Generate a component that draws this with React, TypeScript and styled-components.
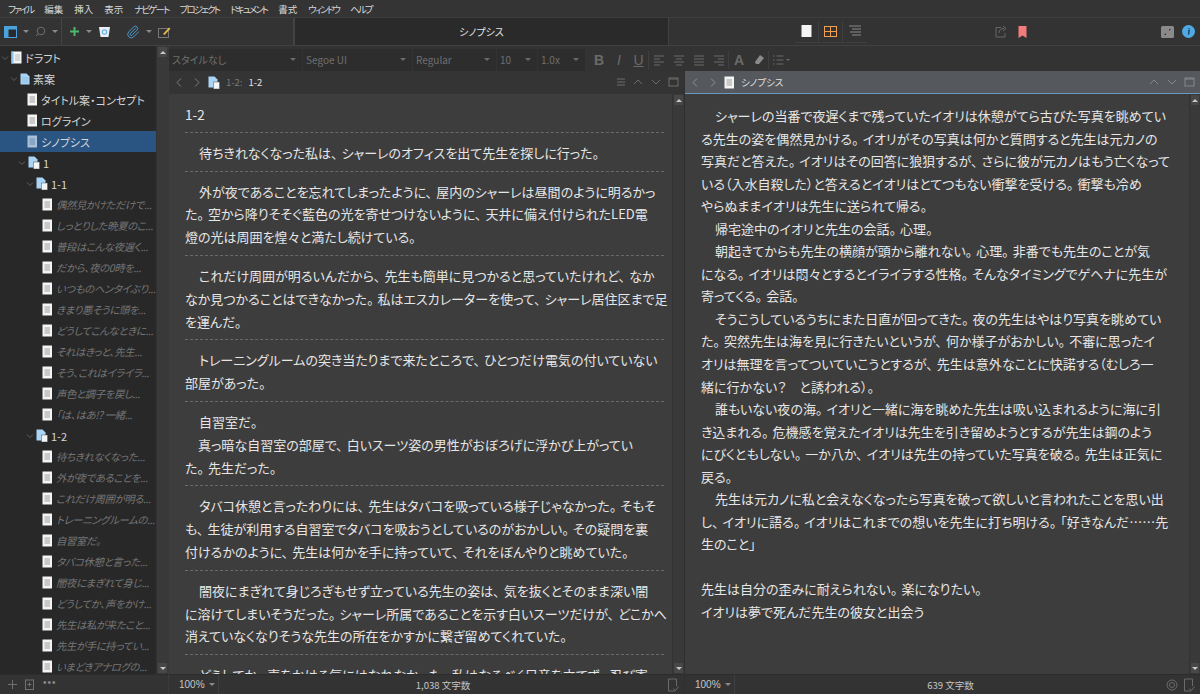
import React from 'react';
import styled, { createGlobalStyle } from 'styled-components';
import { Paperclip } from 'lucide-react';

const GlobalStyle = createGlobalStyle`
  html, body { margin: 0; padding: 0; background: #333; overflow: hidden; }
  * { box-sizing: border-box; }
`;

const JP = `"Noto Sans CJK JP", "Noto Sans", sans-serif`;

const Window = styled.div`
  width: 1200px;
  height: 694px;
  display: flex;
  flex-direction: column;
  background: #333;
  font-family: ${JP};
  font-feature-settings: "palt";
  overflow: hidden;
`;

const MenuBar = styled.div`
  height: 18px;
  display: flex;
  align-items: center;
  padding-left: 8px;
  gap: 11px;
  background: #343434;
  color: #d8d8d8;
  font-size: 9.5px;
  border-bottom: 1px solid #3e3e3e;
`;

const MenuItem = styled.span<{ $tight: boolean }>`
  letter-spacing: ${p => (p.$tight ? '-1.9px' : '0')};
`;

const ToolBar = styled.div`
  height: 28px;
  display: flex;
  border-bottom: 1px solid #414141;
  background: #333;
`;

const ToolLeft = styled.div`
  width: 294px;
  display: flex;
  align-items: center;
  padding-left: 4px;
`;

const ToolSection = styled.div<{ $w: number; $gap: number }>`
  width: ${p => p.$w}px;
  height: 100%;
  display: flex;
  align-items: center;
  gap: ${p => p.$gap}px;
  border-right: 1px solid #444;
`;

const ToolTitle = styled.div`
  width: 375px;
  background: #2a2a2a;
  border-left: 1px solid #424242;
  border-right: 1px solid #424242;
  color: #e4e4e4;
  font-size: 10px;
  display: flex;
  align-items: center;
  justify-content: center;
`;

const ToolRight = styled.div`
  flex: 1;
  display: flex;
  align-items: center;
  padding-left: 126px;
  padding-right: 5px;
`;

const ViewGroup = styled.div`
  display: flex;
  align-items: center;
  height: 22px;
  border-bottom: 1px solid #3f3f3f;
  margin-right: 128px;
`;

const ViewBtn = styled.div`
  width: 24px;
  height: 21px;
  display: flex;
  align-items: center;
  justify-content: center;
  border-right: 1px solid #3f3f3f;
  &:last-child { border-right: none; }
`;

const Spacer = styled.div`
  flex: 1;
`;

const Caret = styled.span<{ $c?: string }>`
  width: 0;
  height: 0;
  border-left: 3px solid transparent;
  border-right: 3px solid transparent;
  border-top: 3px solid ${p => p.$c || '#8a8a8a'};
  display: inline-block;
  flex: none;
`;

const Body = styled.div`
  flex: 1;
  min-height: 0;
  display: flex;
`;

const Sidebar = styled.div`
  width: 169px;
  display: flex;
  flex-direction: column;
  border-right: 1px solid #3a3a3a;
`;

const TreeWrap = styled.div`
  flex: 1;
  min-height: 0;
  display: flex;
`;

const Tree = styled.div`
  width: 157px;
  padding-top: 1px;
  background: #282828;
  overflow: hidden;
`;

const Row = styled.div<{ $indent: number; $sel?: boolean; $scene?: boolean }>`
  height: 21px;
  display: flex;
  align-items: center;
  padding-left: ${p => p.$indent}px;
  gap: 3px;
  white-space: nowrap;
  overflow: hidden;
  background: ${p => (p.$sel ? '#2a5583' : 'transparent')};
  color: ${p => (p.$scene ? '#757575' : '#d6d6d6')};
  font-style: ${p => (p.$scene ? 'italic' : 'normal')};
  font-size: ${p => (p.$scene ? 10.4 : 11)}px;
  letter-spacing: ${p => (p.$scene ? '-0.4px' : '0')};
`;

const Chevron = styled.svg`
  width: 8px;
  height: 8px;
  flex: none;
  margin-right: -1px;
`;

const ScrollTrack = styled.div<{ $w: number }>`
  width: ${p => p.$w}px;
  flex: none;
  display: flex;
  flex-direction: column;
  justify-content: space-between;
  background: #393939;
  border-left: 1px solid #333;
`;

const ScrollBtn = styled.div<{ $up?: boolean }>`
  height: 10px;
  margin: 1px;
  background: #474747;
  display: flex;
  align-items: center;
  justify-content: center;
  &::after {
    content: '';
    border-left: 3px solid transparent;
    border-right: 3px solid transparent;
    ${p => (p.$up ? 'border-bottom: 3px solid #c8c8c8;' : 'border-top: 3px solid #c8c8c8;')}
  }
`;

const StatusBar = styled.div`
  height: 20px;
  flex: none;
  display: flex;
  align-items: center;
  background: #333;
  border-top: 1px solid #2c2c2c;
`;

const SideStatus = styled(StatusBar)`
  padding-left: 8px;
  gap: 8px;
`;

const Dots = styled.span`
  color: #8a8a8a;
  font-size: 10px;
  letter-spacing: 1px;
  line-height: 1;
  font-family: "Liberation Sans", sans-serif;
  margin-top: -3px;
`;

const Main = styled.div`
  flex: 1;
  min-width: 0;
  display: flex;
  flex-direction: column;
`;

const FormatBar = styled.div`
  height: 25px;
  display: flex;
  align-items: center;
  background: #333;
  padding-top: 2px;
`;

const Picker = styled.div<{ $w: number }>`
  width: ${p => p.$w}px;
  height: 22px;
  margin-right: 1px;
  background: #2d2d2d;
  color: #6f6f6f;
  font-size: 10px;
  font-family: "Noto Sans CJK JP", "Liberation Sans", sans-serif;
  display: flex;
  align-items: center;
  justify-content: space-between;
  padding: 0 6px 0 3px;
`;

const FormatIcon = styled.div<{ $w?: number; $sep?: boolean }>`
  width: ${p => p.$w || 20}px;
  display: flex;
  justify-content: center;
  align-items: center;
  color: #6a6a6a;
  font-family: "Liberation Sans", sans-serif;
  font-size: 14px;
  ${p => (p.$sep ? 'border-right: 1px solid #3f3f3f;' : '')}
  height: 18px;
`;

const Letter = styled.span<{ $b?: boolean; $i?: boolean; $u?: boolean }>`
  font-weight: ${p => (p.$b ? 700 : 400)};
  font-style: ${p => (p.$i ? 'italic' : 'normal')};
  text-decoration: ${p => (p.$u ? 'underline' : 'none')};
`;

const Panes = styled.div`
  flex: 1;
  min-height: 0;
  display: flex;
`;

const Pane = styled.div<{ $w: number }>`
  width: ${p => p.$w}px;
  display: flex;
  flex-direction: column;
  border-right: 1px solid #2f2f2f;
  &:last-child { border-right: none; }
`;

const PaneHeader = styled.div<{ $active?: boolean }>`
  height: 23px;
  flex: none;
  display: flex;
  align-items: center;
  padding: 0 5px 0 5px;
  gap: 6px;
  background: ${p => (p.$active ? '#55585c' : '#343434')};
  border-bottom: 1px solid ${p => (p.$active ? '#6d97bb' : '#343434')};
`;

const HeaderLabel = styled.span<{ $dim?: boolean }>`
  font-size: 9.5px;
  color: ${p => (p.$dim ? '#7a7a7a' : '#e2e2e2')};
  white-space: nowrap;
`;

const HeaderTools = styled.div`
  margin-left: auto;
  display: flex;
  align-items: center;
  gap: 6px;
`;

const PaneBody = styled.div`
  flex: 1;
  min-height: 0;
  display: flex;
`;

const Editor = styled.div<{ $pad: number }>`
  flex: 1;
  min-width: 0;
  background: #3d3d3d;
  overflow: hidden;
  padding: ${p => p.$pad}px 0 0 16px;
  color: #e6e6e6;
  font-size: 13px;
`;

const Para = styled.div`
  padding: 9px 0 6px;
  margin-right: 8px;
  border-bottom: 1px dashed #6a6a6a;
  &:last-child { border-bottom: none; }
`;

const Line = styled.div<{ $indent?: boolean; $lh: number }>`
  height: ${p => p.$lh}px;
  line-height: ${p => p.$lh}px;
  white-space: nowrap;
  padding-left: ${p => (p.$indent ? 14 : 0)}px;
`;

const Punct = styled.span`
  padding-right: 4px;
`;

const Heading = styled(Line)`
  font-size: 13.5px;
`;

const ZoomBox = styled.div`
  width: 50px;
  height: 100%;
  flex: none;
  display: flex;
  align-items: center;
  gap: 4px;
  padding-left: 10px;
  color: #c6c6c6;
  font-size: 10px;
  font-family: "Liberation Sans", sans-serif;
  border-right: 1px solid #3f3f3f;
`;

const WordCount = styled.div`
  flex: 1;
  text-align: center;
  color: #c6c6c6;
  font-size: 9.5px;
`;

const StatusIcons = styled.div`
  display: flex;
  align-items: center;
  gap: 5px;
  padding-right: 4px;
`;

const Ico = styled.svg`
  flex: none;
  display: block;
`;

const Gap = styled.span<{ $w: number }>`
  width: ${p => p.$w}px;
  flex: none;
`;

const ClipIcon = styled(Paperclip)`
  flex: none;
  color: #4d9fd6;
`;

const Share = styled(Ico)`
  margin-right: 10px;
`;

const Expand = styled(Ico)`
  margin-right: 8px;
`;

const Doc = () => (
  <Ico width="11" height="13" viewBox="0 0 11 13">
    <rect x="0.5" y="0.5" width="9.5" height="12" fill="#f4f4f4" />
    <rect x="2.5" y="3" width="5.5" height="7" fill="#c9c9c9" />
  </Ico>
);

const DocSel = () => (
  <Ico width="11" height="13" viewBox="0 0 11 13">
    <rect x="0.5" y="0.5" width="9.5" height="12" fill="#a8c0da" />
    <rect x="2.5" y="3" width="5.5" height="7" fill="#8aa6c4" />
  </Ico>
);

const Stack = () => (
  <Ico width="12" height="13" viewBox="0 0 12 13">
    <path d="M0.5 0.5h6l3 3v8h-9z" fill="#a9d4f5" />
    <rect x="5.500" y="6" width="6" height="7" fill="#f4f4f4" stroke="#555" strokeWidth="0.5" />
  </Ico>
);

const BlueDoc = () => (
  <Ico width="10" height="12" viewBox="0 0 10 12">
    <path d="M0.5 0.5h6l3 3v8h-9z" fill="#a9d4f5" />
    <path d="M2 5h6M2 7h6M2 9h6" stroke="#7fb4dd" strokeWidth="0.7" />
  </Ico>
);

const DraftIco = () => (
  <Ico width="11" height="13" viewBox="0 0 11 13">
    <rect x="0.5" y="0.5" width="10" height="12" fill="#f4f4f4" />
    <rect x="0.5" y="0.5" width="2" height="12" fill="#8cc4ee" />
    <rect x="4" y="3" width="5" height="7" fill="#d8d8d8" />
  </Ico>
);

const Chev = () => (
  <Chevron viewBox="0 0 8 8">
    <path d="M1 2.5l3 3 3-3" fill="none" stroke="#5f5f5f" strokeWidth="1" />
  </Chevron>
);

const NavArrow = ({ left, color = '#7d7d7d' }: { left?: boolean; color?: string }) => (
  <Ico width="11" height="11" viewBox="0 0 11 11">
    <path d={left ? 'M7 1.5L3 5.5l4 4' : 'M4 1.5l4 4-4 4'} fill="none" stroke={color} strokeWidth="1" />
  </Ico>
);

const PaneArrow = ({ up, color = '#6c6c6c' }: { up?: boolean; color?: string }) => (
  <Ico width="12" height="10" viewBox="0 0 12 10">
    <path d={up ? 'M2 7l4-4 4 4' : 'M2 3l4 4 4-4'} fill="none" stroke={color} strokeWidth="1" />
  </Ico>
);

const Maximize = ({ color = '#6c6c6c' }: { color?: string }) => (
  <Ico width="11" height="10" viewBox="0 0 11 10">
    <rect x="1" y="1" width="9" height="8" fill="none" stroke={color} strokeWidth="1" />
    <path d="M1 2h9" stroke={color} strokeWidth="1" />
  </Ico>
);

const MenuLines = () => (
  <Ico width="10" height="8" viewBox="0 0 10 8">
    <path d="M1 1h8M1 4h8M1 7h8" stroke="#6c6c6c" strokeWidth="1" />
  </Ico>
);

const DocCheck = () => (
  <Ico width="13" height="14" viewBox="0 0 13 14">
    <path d="M8 13H1.5V1h8v7" fill="none" stroke="#6b6b6b" strokeWidth="1" />
    <path d="M6.5 10.5l2 2 3-4" fill="none" stroke="#6b6b6b" strokeWidth="1" />
  </Ico>
);

const Target = () => (
  <Ico width="12" height="12" viewBox="0 0 12 12">
    <circle cx="6" cy="6" r="5" fill="none" stroke="#6b6b6b" strokeWidth="1" />
    <circle cx="6" cy="6" r="2.5" fill="none" stroke="#6b6b6b" strokeWidth="1" />
  </Ico>
);

const menus = ['ファイル', '編集', '挿入', '表示', 'ナビゲート', 'プロジェクト', 'ドキュメント', '書式', 'ウィンドウ', 'ヘルプ'];
const kanjiMenus = ['編集', '挿入', '表示', '書式'];

type TreeItem = { t: string; i: number; kind: 'doc' | 'stack' | 'draft' | 'blue' | 'scene' | 'sel'; chev?: boolean };

const scenes = (list: string[]): TreeItem[] => list.map(t => ({ t, i: 42, kind: 'scene' }));

const treeItems: TreeItem[] = [
  { t: 'ドラフト', i: 1, kind: 'draft', chev: true },
  { t: '素案', i: 10, kind: 'blue', chev: true },
  { t: 'タイトル案・コンセプト', i: 27, kind: 'doc' },
  { t: 'ログライン', i: 27, kind: 'doc' },
  { t: 'シノプシス', i: 27, kind: 'sel' },
  { t: '1', i: 18, kind: 'stack', chev: true },
  { t: '1-1', i: 26, kind: 'stack', chev: true },
  ...scenes([
    '偶然見かけただけで...', 'しっとりした晩夏のこ...', '普段はこんな夜遅く...', 'だから、夜の0時を...',
    'いつものヘンタイぶり...', 'きまり悪そうに頭を...', 'どうしてこんなときに...', 'それはきっと、先生...',
    'そう、これはイライラ...', '声色と調子を戻し...', '「は、はあ!? 一緒...',
  ]),
  { t: '1-2', i: 26, kind: 'stack', chev: true },
  ...scenes([
    '待ちきれなくなった...', '外が夜であることを...', 'これだけ周囲が明る...', 'トレーニングルームの...',
    '自習室だ。', 'タバコ休憩と言った...', '闇夜にまぎれて身じ...', 'どうしてか、声をかけ...',
    '先生は私が来たこと...', '先生が手に持ってい...', 'いまどきアナログの...',
  ]),
];

const leftParas: string[][] = [
  ['待ちきれなくなった私は、シャーレのオフィスを出て先生を探しに行った。'],
  ['外が夜であることを忘れてしまったように、屋内のシャーレは昼間のように明るかっ', 'た。空から降りそそぐ藍色の光を寄せつけないように、天井に備え付けられたLED電', '燈の光は周囲を煌々と満たし続けている。'],
  ['これだけ周囲が明るいんだから、先生も簡単に見つかると思っていたけれど、なか', 'なか見つかることはできなかった。私はエスカレーターを使って、シャーレ居住区まで足', 'を運んだ。'],
  ['トレーニングルームの突き当たりまで来たところで、ひとつだけ電気の付いていない', '部屋があった。'],
  ['自習室だ。', '\u3000真っ暗な自習室の部屋で、白いスーツ姿の男性がおぼろげに浮かび上がってい', 'た。先生だった。'],
  ['タバコ休憩と言ったわりには、先生はタバコを吸っている様子じゃなかった。そもそ', 'も、生徒が利用する自習室でタバコを吸おうとしているのがおかしい。その疑問を裏', '付けるかのように、先生は何かを手に持っていて、それをぼんやりと眺めていた。'],
  ['闇夜にまぎれて身じろぎもせず立っている先生の姿は、気を抜くとそのまま深い闇', 'に溶けてしまいそうだった。シャーレ所属であることを示す白いスーツだけが、どこかへ', '消えていなくなりそうな先生の所在をかすかに繋ぎ留めてくれていた。'],
  ['どうしてか、声をかける気にはなれなかった。私はなるべく足音を立てず、忍び寄'],
];

const rightLines: { t: string; ind?: boolean }[] = [
  { t: 'シャーレの当番で夜遅くまで残っていたイオリは休憩がてら古びた写真を眺めてい', ind: true },
  { t: 'る先生の姿を偶然見かける。イオリがその写真は何かと質問すると先生は元カノの' },
  { t: '写真だと答えた。イオリはその回答に狼狽するが、さらに彼が元カノはもう亡くなって' },
  { t: 'いる（入水自殺した）と答えるとイオリはとてつもない衝撃を受ける。衝撃も冷め' },
  { t: 'やらぬままイオリは先生に送られて帰る。' },
  { t: '帰宅途中のイオリと先生の会話。心理。', ind: true },
  { t: '朝起きてからも先生の横顔が頭から離れない。心理。非番でも先生のことが気', ind: true },
  { t: 'になる。イオリは悶々とするとイライラする性格。そんなタイミングでゲヘナに先生が' },
  { t: '寄ってくる。会話。' },
  { t: 'そうこうしているうちにまた日直が回ってきた。夜の先生はやはり写真を眺めてい', ind: true },
  { t: 'た。突然先生は海を見に行きたいというが、何か様子がおかしい。不審に思ったイ' },
  { t: 'オリは無理を言ってついていこうとするが、先生は意外なことに快諾する（むしろ一' },
  { t: '緒に行かない？　と誘われる）。' },
  { t: '誰もいない夜の海。イオリと一緒に海を眺めた先生は吸い込まれるように海に引', ind: true },
  { t: 'き込まれる。危機感を覚えたイオリは先生を引き留めようとするが先生は鋼のよう' },
  { t: 'にびくともしない。一か八か、イオリは先生の持っていた写真を破る。先生は正気に' },
  { t: '戻る。' },
  { t: '先生は元カノに私と会えなくなったら写真を破って欲しいと言われたことを思い出', ind: true },
  { t: 'し、イオリに語る。イオリはこれまでの想いを先生に打ち明ける。「好きなんだ……先' },
  { t: '生のこと」' },
  { t: '\u00a0' },
  { t: '先生は自分の歪みに耐えられない。楽になりたい。' },
  { t: 'イオリは夢で死んだ先生の彼女と出会う' },
];

// 句読点は全角の幅に近づける
const withPunct = (s: string) =>
  s.split(/([。、])/).map((part, n) =>
    part === '。' || part === '、' ? <Punct key={n}>{part}</Punct> : part
  );

const TreeRow = ({ item }: { item: TreeItem }) => (
  <Row $indent={item.i} $sel={item.kind === 'sel'} $scene={item.kind === 'scene'}>
    {item.chev && <Chev />}
    {item.kind === 'draft' && <DraftIco />}
    {item.kind === 'blue' && <BlueDoc />}
    {item.kind === 'stack' && <Stack />}
    {(item.kind === 'doc' || item.kind === 'scene') && <Doc />}
    {item.kind === 'sel' && <DocSel />}
    <span>{item.t}</span>
  </Row>
);

export default function App() {
  return (
    <Window>
      <GlobalStyle />
      <MenuBar>
        {menus.map(m => <MenuItem key={m} $tight={!kanjiMenus.includes(m)}>{m}</MenuItem>)}
      </MenuBar>
      <ToolBar>
        <ToolLeft>
          <ToolSection $w={58} $gap={6}>
            <Ico width="13" height="12" viewBox="0 0 13 12">
              <rect x="0.5" y="0.5" width="12" height="11" fill="#2a2a2a" stroke="#4aa3dc" />
              <rect x="0.5" y="0.5" width="12" height="3" fill="#4aa3dc" />
              <rect x="0.5" y="0.5" width="4" height="11" fill="#4aa3dc" />
            </Ico>
            <Caret />
            <Ico width="11" height="11" viewBox="0 0 11 11">
              <circle cx="6" cy="5" r="3.8" fill="none" stroke="#6e6e6e" />
              <path d="M3.2 7.8L1 10" stroke="#6e6e6e" />
            </Ico>
            <Caret />
          </ToolSection>
          <ToolSection $w={232} $gap={6}>
            <Gap $w={1} />
            <Ico width="11" height="11" viewBox="0 0 11 11">
              <path d="M5.5 1v9M1 5.5h9" stroke="#4fb56f" strokeWidth="2" />
            </Ico>
            <Caret />
            <Ico width="13" height="12" viewBox="0 0 13 12">
              <path d="M1 1h11l-1.5 10h-8z" fill="#e9eef2" />
              <circle cx="6.5" cy="6" r="2.2" fill="none" stroke="#68b6e6" strokeWidth="1.2" />
            </Ico>
            <Gap $w={3} />
            <ClipIcon size={14} strokeWidth={1.6} />
            <Caret />
            <Ico width="13" height="12" viewBox="0 0 13 12">
              <rect x="0.5" y="2.5" width="10" height="9" fill="none" stroke="#777" />
              <path d="M5 8l6-6.5 1.5 1.2L6.5 9z" fill="#e8b84a" />
            </Ico>
          </ToolSection>
        </ToolLeft>
        <ToolTitle>シノプシス</ToolTitle>
        <ToolRight>
          <ViewGroup>
            <ViewBtn>
              <Ico width="11" height="12" viewBox="0 0 11 12"><rect x="0.5" y="0" width="10" height="12" fill="#f4f4f4" /></Ico>
            </ViewBtn>
            <ViewBtn>
              <Ico width="13" height="11" viewBox="0 0 13 11">
                <rect x="0.5" y="0.5" width="12" height="10" fill="none" stroke="#f0a050" />
                <path d="M6.5 0.5v10M0.5 5.5h12" stroke="#f0a050" />
              </Ico>
            </ViewBtn>
            <ViewBtn>
              <Ico width="12" height="12" viewBox="0 0 12 12">
                <path d="M0 1h12M3 4h9M1 7h11M3 10h9" stroke="#8a8a8a" />
              </Ico>
            </ViewBtn>
          </ViewGroup>
          <Share width="13" height="13" viewBox="0 0 13 13">
            <path d="M6 2.5H1v9.5h9V8" fill="none" stroke="#686868" />
            <path d="M4 8c0-3 2-4.5 5-4.5M8 1l3 2.5L8 6" fill="none" stroke="#686868" />
          </Share>
          <Ico width="9" height="12" viewBox="0 0 9 12">
            <path d="M0.5 0h8v12L4.5 9.5.5 12z" fill="#f37b7b" />
          </Ico>
          <Spacer />
          <Expand width="13" height="12" viewBox="0 0 13 12">
            <rect width="13" height="12" rx="1.5" fill="#8a8a8a" />
            <path d="M3 9l2-2v2zM10 3L8 5V3z" fill="#333" />
          </Expand>
          <Ico width="13" height="13" viewBox="0 0 13 13">
            <circle cx="6.5" cy="6.5" r="6.5" fill="#4ea9e6" />
            <path d="M6.2 5.5h1l-.7 4.2M7 3v.8" stroke="#1a3a55" strokeWidth="1.3" fill="none" />
          </Ico>
        </ToolRight>
      </ToolBar>
      <Body>
        <Sidebar>
          <TreeWrap>
            <Tree>
              {treeItems.map((item, n) => <TreeRow key={n} item={item} />)}
            </Tree>
            <ScrollTrack $w={12}>
              <ScrollBtn $up />
              <ScrollBtn />
            </ScrollTrack>
          </TreeWrap>
          <SideStatus>
            <Ico width="9" height="9" viewBox="0 0 9 9">
              <path d="M4.5 0v9M0 4.5h9" stroke="#707070" />
            </Ico>
            <Ico width="10" height="11" viewBox="0 0 10 11">
              <rect x="0.5" y="1" width="8" height="9.5" fill="none" stroke="#707070" />
              <path d="M4.5 3.500v4M2.500 5.500h4" stroke="#707070" />
            </Ico>
            <Dots>•••</Dots>
          </SideStatus>
        </Sidebar>
        <Main>
          <FormatBar>
            <Picker $w={133}>スタイルなし<Caret $c="#6a6a6a" /></Picker>
            <Picker $w={109}>Segoe UI<Caret $c="#6a6a6a" /></Picker>
            <Picker $w={83}>Regular<Caret $c="#6a6a6a" /></Picker>
            <Picker $w={40}>10<Caret $c="#6a6a6a" /></Picker>
            <Picker $w={47}>1.0x<Caret $c="#6a6a6a" /></Picker>
            <Gap $w={3} />
            <FormatIcon><Letter $b>B</Letter></FormatIcon>
            <FormatIcon><Letter $i>I</Letter></FormatIcon>
            <FormatIcon $sep><Letter $u>U</Letter></FormatIcon>
            {['M1 2h10M1 5h6M1 8h10M1 11h6', 'M1 2h10M3 5h6M1 8h10M3 11h6', 'M1 2h10M1 5h10M1 8h10M1 11h10', 'M1 2h10M5 5h6M1 8h10M5 11h6'].map((d, n) => (
              <FormatIcon key={d} $sep={n === 3}>
                <Ico width="12" height="12" viewBox="0 0 12 12"><path d={d} stroke="#6a6a6a" /></Ico>
              </FormatIcon>
            ))}
            <FormatIcon><Letter $b>A</Letter></FormatIcon>
            <FormatIcon $sep>
              <Ico width="12" height="12" viewBox="0 0 12 12">
                <path d="M7 1l4 3-5 6H3L2 8z" fill="#8a8a8a" />
              </Ico>
            </FormatIcon>
            <FormatIcon $w={24}>
              <Ico width="17" height="10" viewBox="0 0 17 10">
                <path d="M0 1h1.500M0 5h1.500M0 9h1.500M3.500 1h7M3.500 5h7M3.500 9h7" stroke="#6a6a6a" />
                <path d="M13 4l2 2 2-2z" fill="#6a6a6a" />
              </Ico>
            </FormatIcon>
          </FormatBar>
          <Panes>
            <Pane $w={516}>
              <PaneHeader>
                <NavArrow left />
                <NavArrow />
                <Stack />
                <HeaderLabel $dim>1-2:</HeaderLabel>
                <HeaderLabel>1-2</HeaderLabel>
                <HeaderTools>
                  <MenuLines />
                  <PaneArrow up />
                  <PaneArrow />
                  <Maximize />
                </HeaderTools>
              </PaneHeader>
              <PaneBody>
                <Editor $pad={0}>
                  <Para>
                    <Heading $lh={22.8}>1-2</Heading>
                  </Para>
                  {leftParas.map((p, n) => (
                    <Para key={n}>
                      {p.map((l, k) => <Line key={k} $lh={22.8} $indent={k === 0}>{withPunct(l)}</Line>)}
                    </Para>
                  ))}
                </Editor>
                <ScrollTrack $w={12}>
                  <ScrollBtn $up />
                  <ScrollBtn />
                </ScrollTrack>
              </PaneBody>
              <StatusBar>
                <ZoomBox>100%<Caret /></ZoomBox>
                <WordCount>1,038 文字数</WordCount>
                <StatusIcons><DocCheck /></StatusIcons>
              </StatusBar>
            </Pane>
            <Pane $w={515}>
              <PaneHeader $active>
                <NavArrow left color="#8d9095" />
                <NavArrow color="#8d9095" />
                <Doc />
                <HeaderLabel>シノプシス</HeaderLabel>
                <HeaderTools>
                  <PaneArrow up color="#85888c" />
                  <PaneArrow color="#85888c" />
                  <Maximize color="#85888c" />
                </HeaderTools>
              </PaneHeader>
              <PaneBody>
                <Editor $pad={11}>
                  {rightLines.map((l, n) => <Line key={n} $lh={22.55} $indent={l.ind}>{withPunct(l.t)}</Line>)}
                </Editor>
                <ScrollTrack $w={11}>
                  <ScrollBtn $up />
                  <ScrollBtn />
                </ScrollTrack>
              </PaneBody>
              <StatusBar>
                <ZoomBox>100%<Caret /></ZoomBox>
                <WordCount>639 文字数</WordCount>
                <StatusIcons><Target /><DocCheck /></StatusIcons>
              </StatusBar>
            </Pane>
          </Panes>
        </Main>
      </Body>
    </Window>
  );
}
